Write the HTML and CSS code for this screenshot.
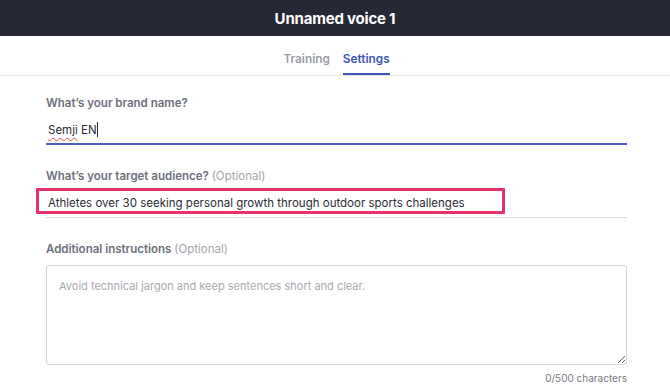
FILE: index.html
```html
<!DOCTYPE html>
<html lang="en">
<head>
    <meta charset="UTF-8">
    <meta name="viewport" content="width=device-width, initial-scale=1.0">
    <title>Unnamed voice 1</title>
    <link rel="stylesheet" href="styles.css">
</head>
<body>
    <header class="topbar">
        <h1>Unnamed voice 1</h1>
    </header>
    <nav class="tabs">
        <span class="tab">Training</span>
        <span class="tab active">Settings</span>
    </nav>
    <main class="container">
        <div class="field">
            <label for="brand">What’s your brand name?</label>
            <div class="line-input focused">
                <span class="value"><span class="spell">Semji</span> EN<span class="caret"></span></span>
            </div>
        </div>

        <div class="field">
            <label for="audience">What’s your target audience? <span class="optional">(Optional)</span></label>
            <div class="line-input">
                <span class="value">Athletes over 30 seeking personal growth through outdoor sports challenges</span>
                <div class="highlight"></div>
            </div>
        </div>

        <div class="field last">
            <label for="instructions">Additional instructions <span class="optional">(Optional)</span></label>
            <textarea id="instructions" placeholder="Avoid technical jargon and keep sentences short and clear."></textarea>
            <div class="counter">0/500 characters</div>
        </div>
    </main>
</body>
</html>
```

FILE: styles.css
```css
body {
    font-family: Inter, "Noto Sans", sans-serif;
    background-color: #fff;
    margin: 0;
    padding: 0;
    color: #2b2d36;
    overflow: hidden;
}
.topbar {
    background-color: #262835;
    height: 36px;
    display: flex;
    justify-content: center;
    align-items: center;
}
.topbar h1 {
    margin: 0;
    color: #fff;
    font-size: 15px;
    font-weight: 700;
    letter-spacing: -0.2px;
}
.tabs {
    display: flex;
    justify-content: center;
    gap: 13px;
    border-bottom: 1px solid #e6e7ea;
    height: 40px;
    box-sizing: border-box;
    padding-left: 3px;
}
.tab {
    font-size: 11.8px;
    font-weight: 600;
    color: #9a9ca5;
    padding-top: 16px;
    box-sizing: border-box;
    height: 39px;
    border-bottom: 2px solid transparent;
}
.tab.active {
    color: #3d56b2;
    border-bottom-color: #3d56b2;
}
.container {
    width: 581px;
    margin-left: 46px;
    padding-top: 19px;
}
.field {
    margin-bottom: 23px;
}
.field.last {
    margin-bottom: 0;
}
label {
    display: block;
    font-size: 11.5px;
    font-weight: 600;
    color: #6d707b;
    line-height: 16px;
}
.optional {
    font-weight: 400;
    color: #a3a5ad;
}
.line-input {
    position: relative;
    border-bottom: 1px solid #d8d9de;
    height: 34px;
    box-sizing: border-box;
    padding-top: 10px;
    line-height: 15px;
}
.line-input.focused {
    border-bottom: 2px solid #4a63c4;
}
.value {
    font-size: 11.5px;
    color: #2b2d36;
    padding-left: 2px;
}
.spell {
    text-decoration: underline wavy #e04848;
    text-decoration-thickness: 1px;
    text-underline-offset: 3px;
}
.caret {
    display: inline-block;
    width: 1px;
    height: 15px;
    background: #2b2d36;
    vertical-align: -3px;
}
.highlight {
    position: absolute;
    left: -10px;
    top: 4px;
    width: 463px;
    height: 20px;
    border: 3px solid #e8336a;
    border-radius: 1px;
}
textarea {
    display: block;
    width: 100%;
    height: 100px;
    margin-top: 8px;
    box-sizing: border-box;
    border: 1px solid #d3d4d8;
    border-radius: 3px;
    padding: 13px 12px;
    font-family: inherit;
    font-size: 11px;
    resize: vertical;
}
textarea::placeholder {
    color: #a9abb2;
}
.counter {
    text-align: right;
    font-size: 10px;
    color: #777a84;
    margin-top: 7px;
}
```
